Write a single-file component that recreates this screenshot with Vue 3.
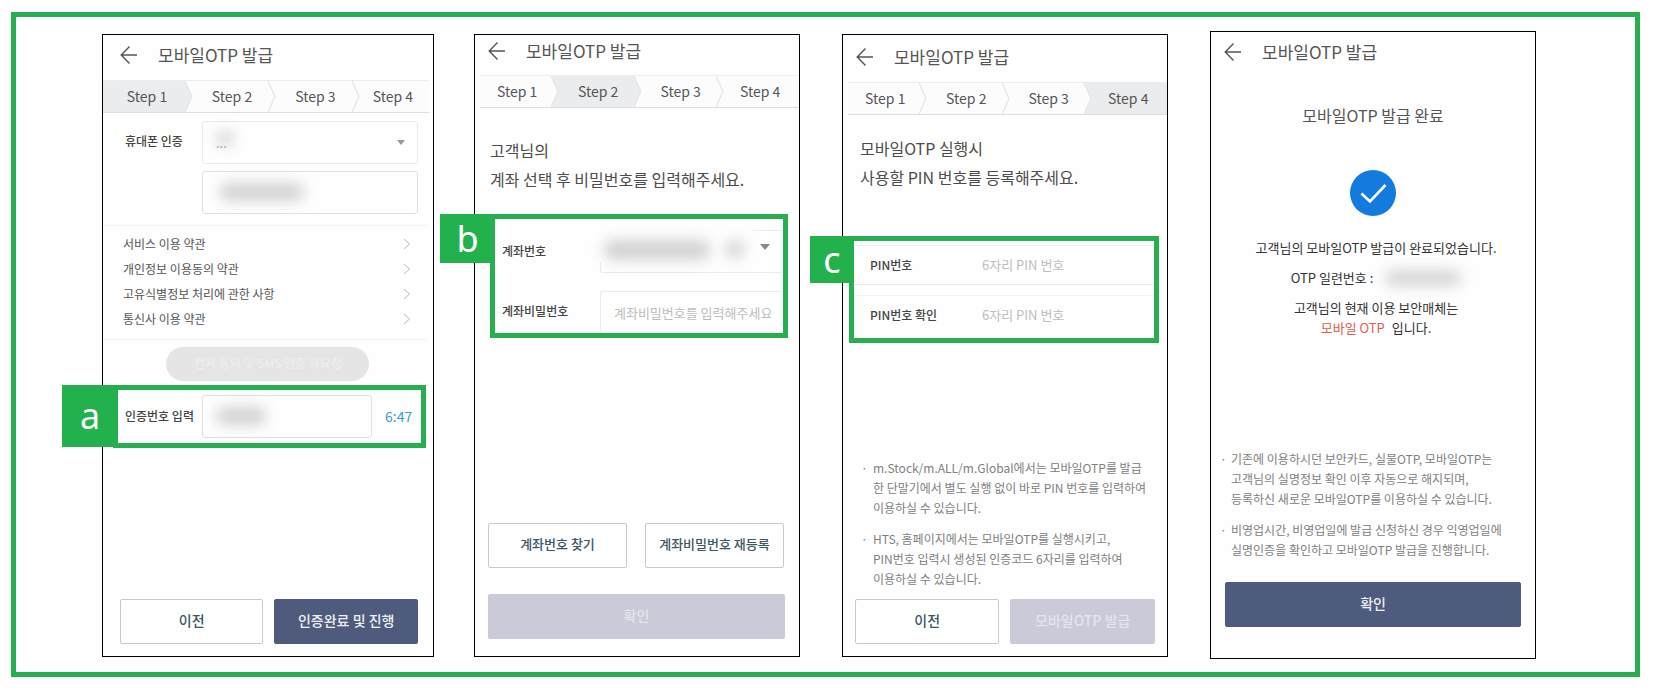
<script setup>
import { h } from 'vue'

const steps = ['Step 1', 'Step 2', 'Step 3', 'Step 4']
const terms = ['서비스 이용 약관', '개인정보 이용동의 약관', '고유식별정보 처리에 관한 사항', '통신사 이용 약관']

const AppHeader = () =>
  h('header', { class: 'app-header' }, [
    h('button', { class: 'back', type: 'button', 'aria-label': '뒤로' }, [
      h('svg', { viewBox: '0 0 18 20', width: 18, height: 20, fill: 'none', stroke: '#555', 'stroke-width': 1.4 }, [
        h('path', { d: 'M9.5 1.5 1.2 10l8.3 8.5M1.2 10H17' })
      ])
    ]),
    h('h2', { class: 'app-title' }, '모바일OTP 발급')
  ])

const Stepper = (props) =>
  h('ol', { class: 'stepper' }, steps.map((label, i) =>
    h('li', { class: ['step', { active: props.active === i + 1, before: props.active === i + 2 }] }, [
      h('span', { class: 'step-label' }, label),
      i < 3
        ? h('svg', { class: 'step-arrow', viewBox: '0 0 8 32', preserveAspectRatio: 'none' }, [
            h('path', { d: 'M0 0 7 16 0 32z', class: 'step-fill' }),
            h('path', { d: 'M0 0 7 16 0 32', class: 'step-line' })
          ])
        : null
    ])
  ))
Stepper.props = ['active']
</script>

<template>
  <main class="page">
    <div class="frame">
      <section class="screen screen-1">
        <AppHeader />
        <Stepper :active="1" />
        <div class="phone-form">
          <label class="label" for="carrier">휴대폰 인증</label>
          <div class="field">
            <select id="carrier" class="control faint"><option>...</option></select>
            <span class="smudge smudge-carrier"></span>
            <svg class="caret" viewBox="0 0 10 6"><path d="M0 0h10L5 6z" /></svg>
          </div>
          <div class="field second">
            <input class="control" type="text" aria-label="휴대폰 번호" />
            <span class="smudge smudge-phone"></span>
          </div>
        </div>
        <ul class="terms">
          <li v-for="t in terms" :key="t">
            <a href="#">{{ t }}
              <svg viewBox="0 0 8 12" width="8" height="12"><path d="M1 1l5.5 5L1 11" /></svg>
            </a>
          </li>
        </ul>
        <button class="pill" type="button" disabled>전체 동의 및 SMS 인증 재요청</button>
        <div class="mark mark-a">
          <span class="badge">a</span>
          <label class="label" for="code">인증번호 입력</label>
          <div class="field">
            <input id="code" class="control" type="text" />
            <span class="smudge smudge-code"></span>
          </div>
          <span class="timer">6:47</span>
        </div>
        <footer class="actions">
          <button class="btn outline" type="button">이전</button>
          <button class="btn primary" type="button">인증완료 및 진행</button>
        </footer>
      </section>

      <section class="screen screen-2">
        <AppHeader />
        <Stepper :active="2" />
        <p class="lead">고객님의<br />계좌 선택 후 비밀번호를 입력해주세요.</p>
        <div class="mark mark-b">
          <span class="badge">b</span>
          <label class="label" for="account">계좌번호</label>
          <div class="field">
            <select id="account" class="control faint"><option></option></select>
            <span class="veil"></span>
            <span class="smudge smudge-account"></span>
            <span class="smudge smudge-account-end"></span>
            <svg class="caret" viewBox="0 0 10 6"><path d="M0 0h10L5 6z" /></svg>
          </div>
          <label class="label" for="account-pw">계좌비밀번호</label>
          <div class="field">
            <input id="account-pw" class="control faint open" type="text" placeholder="계좌비밀번호를 입력해주세요" />
          </div>
        </div>
        <footer class="actions split">
          <button class="btn outline small" type="button">계좌번호 찾기</button>
          <button class="btn outline small" type="button">계좌비밀번호 재등록</button>
        </footer>
        <button class="btn muted wide" type="button" disabled>확인</button>
      </section>

      <section class="screen screen-3">
        <AppHeader />
        <Stepper :active="4" />
        <p class="lead">모바일OTP 실행시<br />사용할 PIN 번호를 등록해주세요.</p>
        <div class="mark mark-c">
          <span class="badge">c</span>
          <div class="pin-row">
            <label class="label" for="pin">PIN번호</label>
            <input id="pin" type="text" placeholder="6자리 PIN 번호" />
          </div>
          <div class="pin-row">
            <label class="label" for="pin2">PIN번호 확인</label>
            <input id="pin2" type="text" placeholder="6자리 PIN 번호" />
          </div>
        </div>
        <ul class="notes">
          <li>m.Stock/m.ALL/m.Global에서는 모바일OTP를 발급<br />한 단말기에서 별도 실행 없이 바로 PIN 번호를 입력하여<br />이용하실 수 있습니다.</li>
          <li>HTS, 홈페이지에서는 모바일OTP를 실행시키고,<br />PIN번호 입력시 생성된 인증코드 6자리를 입력하여<br />이용하실 수 있습니다.</li>
        </ul>
        <footer class="actions">
          <button class="btn outline" type="button">이전</button>
          <button class="btn muted" type="button" disabled>모바일OTP 발급</button>
        </footer>
      </section>

      <section class="screen screen-4">
        <AppHeader />
        <h3 class="done-title">모바일OTP 발급 완료</h3>
        <svg class="done-icon" viewBox="0 0 46 46" width="46" height="46">
          <circle cx="23" cy="23" r="23" fill="#127bdd" />
          <path d="M11.5 23.5 20 31.5 35.5 15" fill="none" stroke="#fff" stroke-width="2.6" />
        </svg>
        <div class="result">
          <p>고객님의 모바일OTP 발급이 완료되었습니다.</p>
          <p class="serial">OTP 일련번호 :<span class="serial-value"></span></p>
          <p class="media">고객님의 현재 이용 보안매체는<br /><em>모바일 OTP</em> 입니다.</p>
        </div>
        <ul class="notes">
          <li>기존에 이용하시던 보안카드, 실물OTP, 모바일OTP는<br />고객님의 실명정보 확인 이후 자동으로 해지되며,<br />등록하신 새로운 모바일OTP를 이용하실 수 있습니다.</li>
          <li>비영업시간, 비영업일에 발급 신청하신 경우 익영업일에<br />실명인증을 확인하고 모바일OTP 발급을 진행합니다.</li>
        </ul>
        <button class="btn primary wide" type="button">확인</button>
      </section>
    </div>
  </main>
</template>

<style>
body {
  margin: 0;
  background: #fefefe;
}
.app-header {
  display: flex;
  align-items: center;
  gap: 20px;
  height: 46px;
  padding-left: 13px;
}
.back {
  display: flex;
  padding: 0;
  border: 0;
  background: none;
}
.app-title {
  margin: 0;
  font-size: 17px;
  font-weight: 400;
  line-height: 24px;
  color: #555;
}
.stepper {
  display: grid;
  grid-template-columns: 80fr 83fr 83fr 75fr;
  margin: 0;
  padding: 0;
  list-style: none;
  border-top: 1px solid #ededef;
  border-bottom: 1px solid #dcdde0;
  background: #fcfcfd;
}
.step {
  display: flex;
  height: 31px;
}
.step-label {
  flex: 1;
  padding-left: 3px;
  font-size: 14px;
  line-height: 30px;
  text-align: center;
  color: #555;
}
.step:last-child .step-label {
  padding: 0 3px 0 0;
}
.step-arrow {
  width: 8px;
  height: 31px;
}
.step-fill {
  fill: #fcfcfd;
}
.step-line {
  fill: none;
  stroke: #e4e5e8;
  stroke-width: 1.2;
}
.step.active,
.step.active .step-fill {
  background: #ebecee;
  fill: #ebecee;
}
.step.active .step-arrow {
  background: #fcfcfd;
}
.step.before .step-arrow {
  background: #ebecee;
}
</style>

<style scoped>
.page {
  display: flex;
  box-sizing: border-box;
  min-height: 100vh;
  padding: 12px 18px 18px 11px;
  font-family: "Noto Sans CJK KR", "Noto Sans", sans-serif;
  color: #444;
}
.page * {
  box-sizing: border-box;
}
.frame {
  flex: 1;
  display: flex;
  padding: 14px 99px 13px 86px;
  border: 5px solid #27ae51;
}
.screen {
  display: flex;
  flex: 326 1 0;
  flex-direction: column;
  min-width: 0;
  margin: 3px 0 2px 42px;
  border: 1px solid #000;
  background: #fefefe;
}
.screen-1 {
  flex-grow: 332;
  margin-left: 0;
}
.screen-2 {
  margin-left: 40px;
}
.screen-4 {
  margin-top: 0;
  margin-bottom: 0;
}
.screen-1 :deep(.app-header) {
  height: 45px;
  padding: 0 0 6px 17px;
}
.screen-1 :deep(.stepper) {
  margin-right: 4px;
  grid-template-columns: 90fr 83fr 84fr 69fr;
}
.screen-1 :deep(.step:first-child .step-label) {
  padding-left: 6px;
}
.screen-2 :deep(.app-header) {
  height: 40px;
  padding-bottom: 8px;
}
.screen-2 :deep(.stepper),
.screen-3 :deep(.stepper) {
  margin-left: 5px;
}
.screen-3 :deep(.app-header) {
  height: 47px;
  padding-bottom: 4px;
}
.screen-4 :deep(.app-header) {
  height: 40px;
}
.label {
  font-size: 12px;
  font-weight: 500;
  line-height: 18px;
  color: #444;
}
.field {
  position: relative;
  min-width: 0;
}
.control {
  display: block;
  width: 100%;
  height: 43px;
  padding: 0 13px;
  border: 1px solid #e0e0e0;
  border-radius: 3px;
  background: #fefefe;
  font: 400 13px/20px "Noto Sans CJK KR", sans-serif;
  color: #999;
  appearance: none;
}
.faint {
  border-color: #ebebed;
}
.control::placeholder,
.pin-row input::placeholder {
  color: #bdbdbd;
  opacity: 1;
}
.caret {
  position: absolute;
  top: 19px;
  right: 13px;
  width: 8px;
  height: 5px;
  fill: #999;
}
.smudge {
  position: absolute;
  border-radius: 8px;
  background: #b5b5b5;
  filter: blur(7px);
  opacity: 0.6;
}
.veil {
  position: absolute;
  top: -2px;
  left: -2px;
  width: 155px;
  height: 34px;
  background: #fefefe;
}
.smudge-carrier {
  left: 14px;
  top: 10px;
  width: 18px;
  height: 14px;
}
.smudge-phone {
  left: 18px;
  top: 12px;
  width: 84px;
  height: 18px;
}
.smudge-code {
  left: 14px;
  top: 12px;
  width: 50px;
  height: 18px;
}
.smudge-account {
  left: 4px;
  top: 10px;
  width: 106px;
  height: 20px;
}
.smudge-account-end {
  left: 126px;
  top: 10px;
  width: 18px;
  height: 18px;
}
.phone-form {
  display: grid;
  grid-template-columns: 77px 1fr;
  row-gap: 7px;
  margin-right: 6px;
  padding: 8px 9px 11px 22px;
  border-bottom: 1px solid #f2f2f2;
}
.phone-form .label {
  padding-top: 11px;
}
.second {
  grid-column: 2;
}
.terms {
  margin: 0 6px 0 0;
  padding: 5px 10px 8px 20px;
  list-style: none;
  border-bottom: 1px solid #f2f2f2;
}
.terms a {
  display: flex;
  align-items: center;
  justify-content: space-between;
  padding-right: 6px;
  font-size: 12px;
  line-height: 25px;
  color: #555;
  text-decoration: none;
}
.terms path {
  fill: none;
  stroke: #b8b8b8;
}
.pill {
  align-self: center;
  width: 203px;
  height: 34px;
  margin-top: 7px;
  padding: 0 0 2px;
  border: 0;
  border-radius: 17px;
  background: #e5e5e5;
  font: 400 12px/20px "Noto Sans CJK KR", sans-serif;
  color: #efefef;
}
.mark {
  position: relative;
  border: 5px solid #27ae51;
}
.badge {
  position: absolute;
  top: -5px;
  display: flex;
  align-items: center;
  justify-content: center;
  background: #23b14d;
  font: 400 36px/40px "Noto Sans", sans-serif;
  color: #fff;
}
.mark-a {
  display: grid;
  grid-template-columns: 77px 1fr 49px;
  align-items: center;
  margin: 4px 7px 0 10px;
  padding: 5px 0 5px 7px;
}
.mark-a .label,
.mark-a .timer {
  padding-bottom: 2px;
}
.mark-a .badge {
  left: -56px;
  width: 56px;
  height: 62px;
}
.timer {
  padding-left: 13px;
  font-size: 14px;
  line-height: 20px;
  color: #3a9cd0;
}
.actions {
  display: grid;
  grid-template-columns: 1fr 1fr;
  gap: 11px;
  margin: auto 15px 12px 17px;
}
.btn {
  height: 45px;
  padding: 0 0 3px;
  border: 1px solid #c9c9cc;
  border-radius: 2px;
  background: #fefefe;
  font: 500 14px/20px "Noto Sans CJK KR", sans-serif;
  color: #3d5563;
}
.small {
  font-size: 13px;
}
.primary {
  border-color: #4e5b7c;
  background: #4e5b7c;
  color: #eef0f5;
}
.muted {
  border-color: #cbcad8;
  background: #cbcad8;
  color: #e4e4ec;
}
.lead {
  margin: 28px 0 0 15px;
  font-size: 16px;
  line-height: 29px;
  color: #4c4c4c;
  white-space: nowrap;
}
.mark-b {
  display: grid;
  grid-template-columns: 98px 1fr;
  row-gap: 18px;
  align-items: center;
  margin: 20px 11px 0 15px;
  padding: 11px 0 0 7px;
}
.mark-b .label {
  padding-bottom: 2px;
}
.mark-b .badge {
  left: -55px;
  width: 55px;
  height: 49px;
}
.mark-b .control {
  border-right: 0;
}
.mark-b .open {
  height: 42px;
  padding-right: 12px;
  border-bottom: 0;
}
.mark-b .caret {
  top: 14px;
  width: 10px;
  height: 6px;
  fill: #888;
}
.split {
  gap: 18px;
  margin: auto 15px 26px 13px;
}
.screen-2 .wide {
  margin: 0 14px 17px 13px;
}
.screen-3 .lead {
  margin: 19px 0 0 17px;
}
.mark-c {
  margin: 44px 8px 0 6px;
  padding: 4px 0 5px;
}
.mark-c .badge {
  left: -44px;
  width: 44px;
  height: 47px;
}
.pin-row {
  display: grid;
  grid-template-columns: 112px 1fr;
  align-items: center;
  height: 40px;
  padding-left: 16px;
  border-top: 1px solid #f3f3f3;
  border-bottom: 1px solid #ececee;
}
.pin-row + .pin-row {
  height: 38px;
  margin-top: 10px;
  border-bottom: 0;
}
.pin-row input {
  width: 100%;
  padding: 0;
  border: 0;
  background: none;
  font: 400 13px/20px "Noto Sans CJK KR", sans-serif;
}
.notes {
  margin: auto 0 0;
  padding: 0 0 0 30px;
  list-style: none;
  font-size: 12px;
  line-height: 20px;
  color: #808080;
  white-space: nowrap;
}
.notes li {
  position: relative;
}
.notes li::before {
  content: "·";
  position: absolute;
  left: -12px;
}
.notes li + li {
  margin-top: 11px;
}
.screen-3 .actions {
  margin: 10px 12px 12px;
}
.done-title {
  margin: 31px 0 0;
  font-size: 16px;
  font-weight: 400;
  line-height: 24px;
  text-align: center;
  color: #555;
}
.done-icon {
  align-self: center;
  margin-top: 43px;
}
.result {
  padding: 22px 0 0 6px;
  font-size: 13px;
  line-height: 20px;
  text-align: center;
  color: #333;
}
.result p {
  margin: 0;
}
.result .serial {
  display: flex;
  justify-content: center;
  align-items: center;
  gap: 12px;
  margin: 10px 0;
}
.serial-value {
  width: 76px;
  height: 16px;
  border-radius: 8px;
  background: #c4c4c4;
  filter: blur(7px);
  opacity: 0.7;
}
.result em {
  margin-right: 4px;
  font-style: normal;
  color: #e0604c;
}
.screen-4 .notes {
  padding-left: 20px;
}
.screen-4 .notes li::before {
  left: -11px;
}
.screen-4 .wide {
  margin: 22px 14px 31px;
}
</style>
